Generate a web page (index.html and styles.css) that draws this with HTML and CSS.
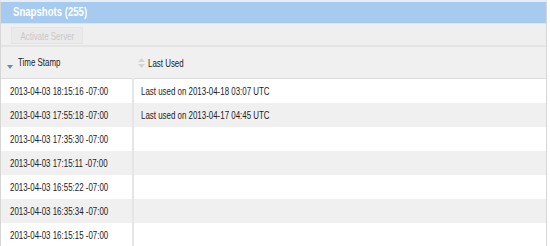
FILE: index.html
```html
<!DOCTYPE html>
<html>
<head>
<meta charset="utf-8">
<link rel="stylesheet" href="styles.css">
</head>
<body>
<div class="panel">
  <div class="title"><span class="sq-title">Snapshots (255)</span></div>
  <div class="toolbar"><button class="btn" disabled><span class="sq-c">Activate Server</span></button></div>
  <table class="grid">
    <thead>
      <tr>
        <th class="c1"><span class="sort-down"></span><span class="sq">Time Stamp</span></th>
        <th class="c2"><svg class="sort-both" width="7" height="10" viewBox="0 0 7 10"><path d="M3.5 0 L7 4 H0 Z M0 6 H7 L3.5 10 Z" fill="#d4d4d4"/></svg><span class="sq">Last Used</span></th>
      </tr>
    </thead>
    <tbody>
      <tr><td><span class="sq">2013-04-03 18:15:16 -07:00</span></td><td><span class="sq">Last used on 2013-04-18 03:07 UTC</span></td></tr>
      <tr class="alt"><td><span class="sq">2013-04-03 17:55:18 -07:00</span></td><td><span class="sq">Last used on 2013-04-17 04:45 UTC</span></td></tr>
      <tr><td><span class="sq">2013-04-03 17:35:30 -07:00</span></td><td></td></tr>
      <tr class="alt"><td><span class="sq">2013-04-03 17:15:11 -07:00</span></td><td></td></tr>
      <tr><td><span class="sq">2013-04-03 16:55:22 -07:00</span></td><td></td></tr>
      <tr class="alt"><td><span class="sq">2013-04-03 16:35:34 -07:00</span></td><td></td></tr>
      <tr><td><span class="sq">2013-04-03 16:15:15 -07:00</span></td><td></td></tr>
    </tbody>
  </table>
</div>
</body>
</html>
```
FILE: styles.css
```css
html, body { margin: 0; padding: 0; background: #fff; }
body { font-family: "Liberation Sans", Arial, sans-serif; font-size: 11px; color: #222; }
.sq, .sq-title, .sq-c {
  display: inline-block;
  white-space: nowrap;
  transform-origin: 0 50%;
  transform: scaleX(0.72);
}
.sq-title { transform: scaleX(0.8); }
.sq-c { transform-origin: 50% 50%; }
.panel {
  width: 545px;
  border-left: 1px solid #d6d6d6;
  border-right: 1px solid #d6d6d6;
  border-top: 2px solid #e8eef6;
  height: 244px;
  overflow: hidden;
}
.title {
  height: 21px;
  line-height: 21px;
  background: #a6caf0;
  color: #fff;
  font-weight: bold;
  font-size: 12px;
  padding-left: 12px;
}
.toolbar {
  height: 24px;
  background: #efefef;
  border-top: 1px solid #e2e2e2;
  border-bottom: 2px solid #e4e4e4;
  box-sizing: border-box;
  padding: 3px 0 0 10px;
  display: flex;
  align-items: flex-start;
}
.btn {
  font-family: inherit;
  font-size: 11px;
  color: #c9c9c9;
  background: #eaeaea;
  border: 1px solid #e5e5e5;
  height: 17px;
  padding: 0;
  width: 72px;
  margin: 0;
  white-space: nowrap;
  display: flex;
  align-items: center;
  justify-content: center;
  overflow: visible;
}
.grid { width: 100%; border-collapse: collapse; table-layout: fixed; }
.grid th {
  height: 31px;
  background: #f0f0f0;
  font-weight: normal;
  text-align: left;
  color: #222;
  border-bottom: 1px solid #dcdcdc;
  padding: 0;
  font-size: 11px;
  white-space: nowrap;
}
.grid th.c1 { width: 132px; padding-left: 6px; box-sizing: border-box; }
.grid th.c2 { padding-left: 5px; }
.sort-down {
  display: inline-block;
  width: 0; height: 0;
  border-left: 3px solid transparent;
  border-right: 3px solid transparent;
  border-top: 4px solid #6b8ba8;
  margin-right: 5px;
  vertical-align: -3px;
}
.sort-both { margin-right: 3px; vertical-align: -1px; }
.grid td {
  height: 24px;
  padding: 0 0 0 9px;
  white-space: nowrap;
}
.grid td:first-child { border-right: 2px solid #e6e6e6; }
.grid td + td { padding-left: 7px; }
.grid tr.alt td { background: #f0f0f0; }
```
